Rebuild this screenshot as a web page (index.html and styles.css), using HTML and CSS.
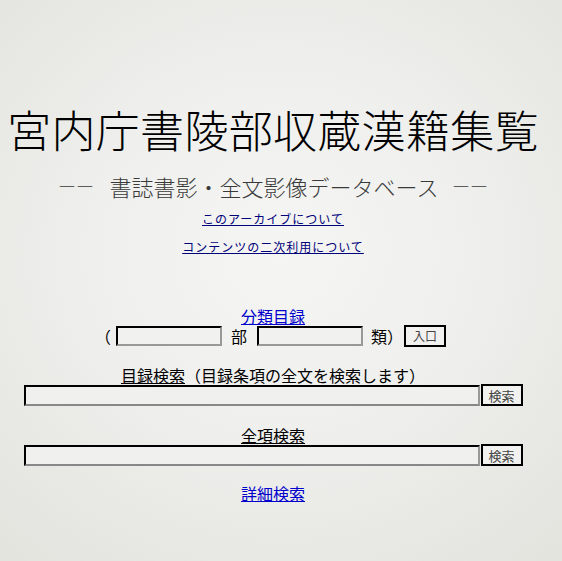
FILE: index.html
```html
<!DOCTYPE html>
<html lang="ja">
<head>
<meta charset="utf-8">
<title>宮内庁書陵部収蔵漢籍集覧</title>
<link rel="stylesheet" href="styles.css">
</head>
<body>
<div class="page">
  <h1 class="title">宮内庁書陵部収蔵漢籍集覧</h1>
  <p class="subtitle"><span class="dash">―</span><span class="dash">―</span><span class="sub-text">書誌書影・全文影像データベース</span><span class="dash">―</span><span class="dash">―</span></p>
  <a class="small-link link1" href="#">このアーカイブについて</a>
  <a class="small-link link2" href="#">コンテンツの二次利用について</a>

  <a class="label-link link-blue cat-link" href="#">分類目録</a>
  <form class="cat-row">
    <span class="paren">（</span>
    <input class="cat-input" type="text">
    <span class="word word-bu">部</span>
    <input class="cat-input" type="text">
    <span class="word word-rui">類）</span>
    <button class="btn enter-btn" type="button">入口</button>
  </form>

  <div class="label label1"><a class="label-link link-black" href="#">目録検索</a>（目録条項の全文を検索します）</div>
  <form class="search-row">
    <input class="search-input" type="text">
    <button class="btn search-btn" type="button">検索</button>
  </form>

  <div class="label label2"><a class="label-link link-black" href="#">全項検索</a></div>
  <form class="search-row">
    <input class="search-input" type="text">
    <button class="btn search-btn" type="button">検索</button>
  </form>

  <a class="label-link link-blue detail-link" href="#">詳細検索</a>
</div>
</body>
</html>
```
FILE: styles.css
```css
html, body {
  margin: 0;
  padding: 0;
  height: 100%;
}
body {
  background: radial-gradient(ellipse 75% 70% at 50% 45%, #f5f5f3 0%, #efefed 45%, #e6e7e2 85%, #e3e4de 100%);
  font-family: "Noto Sans CJK JP", "Noto Sans", sans-serif;
  color: #000;
  min-height: 561px;
}
.page {
  width: 530px;
  margin-left: 8px;
  display: flex;
  flex-direction: column;
  align-items: center;
  padding-top: 107px;
}
.title {
  margin: 0;
  font-size: 44px;
  line-height: 44px;
  font-weight: 300;
  white-space: nowrap;
  letter-spacing: 0.3px;
}
.subtitle {
  margin: 24px 0 0;
  display: flex;
  align-items: center;
  gap: 1px;
  height: 22px;
  color: #3a3a3a;
  white-space: nowrap;
  font-weight: 300;
}
.dash {
  font-size: 17px;
  line-height: 22px;
}
.sub-text {
  font-size: 22px;
  line-height: 22px;
  margin: 0 13px 0 15px;
}
.small-link {
  font-size: 12px;
  line-height: 13px;
  letter-spacing: 1px;
  color: #00007a;
  white-space: nowrap;
}
.link1 { margin-top: 15px; }
.link2 { margin-top: 15px; }
.label-link {
  font-size: 16px;
  line-height: 16px;
}
.link-blue { color: #0000cc; }
.link-black { color: #000; }
.cat-link { margin-top: 55px; }
.cat-row {
  display: flex;
  align-items: center;
  margin: 1px 0 0 0;
  height: 22px;
  font-size: 16px;
}
.paren {
  width: 16px;
  margin: 0 5px 0 -5px;
}
.word-bu { margin: 0 10px 0 9px; }
.word-rui { margin: 0 1px 0 8px; }
.cat-input {
  width: 106px;
  height: 20px;
  box-sizing: border-box;
  border: 2px inset #777;
  border-top-color: #333;
  border-left-color: #333;
  border-bottom-color: #999;
  border-right-color: #999;
  background: #f1f1f0;
  padding: 0;
  margin: 0;
}
.btn {
  box-sizing: border-box;
  border: 2px solid #000;
  background: #f1f1ef;
  font-family: "Noto Sans CJK JP", sans-serif;
  font-size: 13px;
  line-height: 1;
  color: #444;
  padding: 0;
  margin: 0;
}
.enter-btn {
  width: 42px;
  height: 22px;
  font-size: 12px;
}
.label {
  font-size: 16px;
  line-height: 16px;
  white-space: nowrap;
}
.label1 { margin-top: 20px; }
.label2 { margin-top: 21px; }
.search-row {
  display: flex;
  align-items: flex-end;
  margin-top: 2px;
  height: 21px;
}
.search-input {
  width: 456px;
  height: 21px;
  box-sizing: border-box;
  border: 2px inset #777;
  border-top-color: #333;
  border-left-color: #333;
  border-bottom-color: #888;
  border-right-color: #999;
  background: #f0f0ee;
  padding: 0;
  margin: 0;
}
.search-btn {
  width: 42px;
  height: 22px;
  margin-left: 1px;
}
.detail-link { margin-top: 19px; }
```
